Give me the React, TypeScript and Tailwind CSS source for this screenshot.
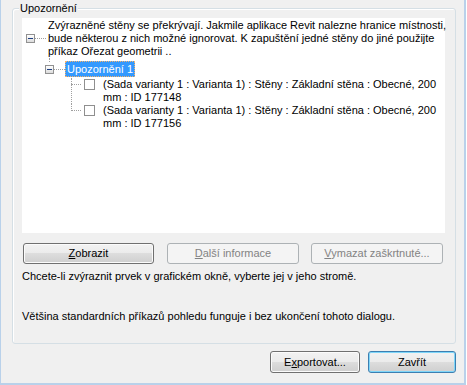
import React from "react";

const font = "font-['Tahoma','Liberation_Sans',Arial,sans-serif]";

const Expander: React.FC = () => (
  <span className="flex h-[9px] w-[9px] shrink-0 items-center justify-center border border-[#919191] bg-[linear-gradient(to_bottom,#ffffff,#dcdcdc)]">
    <span className="h-[1px] w-[5px] bg-[#1e3f82]" />
  </span>
);

const HDots: React.FC<{ w: string }> = ({ w }) => (
  <span className={`h-0 border-t border-dotted border-[#a0a0a0] ${w}`} />
);

const Btn: React.FC<{
  w: string;
  h: string;
  disabled?: boolean;
  primary?: boolean;
  children: React.ReactNode;
}> = ({ w, h, disabled, primary, children }) => {
  const look = disabled
    ? "border-[#adb2b5] bg-[#f4f4f4] text-[#838383]"
    : primary
      ? "border-[#3c7fb1] text-black shadow-[inset_0_0_0_1px_#7fd6f9] bg-[linear-gradient(to_bottom,#f2f2f2_0%,#ebebeb_50%,#dddddd_50%,#cfcfcf_100%)]"
      : "border-[#707070] text-black shadow-[inset_0_0_0_1px_#fbfbfb] bg-[linear-gradient(to_bottom,#f2f2f2_0%,#ebebeb_50%,#dddddd_50%,#cfcfcf_100%)]";
  return (
    <div
      className={`flex shrink-0 items-center justify-center rounded-[3px] border text-[11px] leading-[13px] ${w} ${h} ${look}`}
    >
      {children}
    </div>
  );
};

const Item: React.FC<{ id: string; last?: boolean }> = ({ id, last }) => (
  <div className="relative flex">
    <span
      className={`absolute left-[49px] top-0 border-l border-dotted border-[#a0a0a0] ${last ? "h-[7px]" : "h-[26px]"}`}
    />
    <div className="flex h-[13px] w-[81px] shrink-0 items-center pl-[49px]">
      <HDots w="w-[10px]" />
      <span className="ml-[3px] h-[11px] w-[11px] shrink-0 border border-[#8f8f8f] bg-white" />
    </div>
    <div className="whitespace-nowrap leading-[13px]">
      (Sada varianty 1 : Varianta 1) : Stěny : Základní stěna : Obecné, 200
      <br />
      mm : ID {id}
    </div>
  </div>
);

export default function App() {
  return (
    <div className={`h-[385px] w-[467px] bg-white ${font} text-[11px] text-black`}>
      <div className="flex h-[385px] w-[466px] flex-col border-b-2 border-l border-r-2 border-[#b9d1ea] bg-[#f0f0f0]">
        {/* group box */}
        <div className="relative ml-[11px] mt-[8px] h-[336px] w-[444px] rounded-[3px] border border-[#d5dfe5] pl-[9px] pt-[9px] shadow-[inset_1px_1px_0_#ffffff]">
          <span className="absolute -top-[7px] left-[6px] bg-[#f0f0f0] px-[1px] leading-[13px]">
            Upozornění
          </span>

          {/* tree */}
          <div className="h-[215px] w-[423px] bg-white pt-[1px]">
            <div className="flex">
              <div className="flex w-[26px] shrink-0 items-center pl-[4px]">
                <Expander />
                <HDots w="w-[11px]" />
              </div>
              <div className="whitespace-nowrap leading-[13px]">
                Zvýrazněné stěny se překrývají. Jakmile aplikace Revit nalezne hranice místnosti,
                <br />
                bude některou z nich možné ignorovat. K zapuštění jedné stěny do jiné použijte
                <br />
                příkaz Ořezat geometrii ..
              </div>
            </div>

            <div className="relative mt-[3px] flex h-[16px]">
              <span className="absolute -top-[3px] left-[27px] h-[4px] border-l border-dotted border-[#a0a0a0]" />
              <div className="flex w-[43px] shrink-0 items-center pl-[23px]">
                <Expander />
                <HDots w="w-[11px]" />
              </div>
              <div className="flex h-[16px] items-center border border-dotted border-[#f6b26b] bg-[#3399ff] px-[1px] leading-[13px] text-white">
                Upozornění 1
              </div>
            </div>

            <div className="pt-[1px]">
              <Item id="177148" />
              <Item id="177156" last />
            </div>
          </div>

          {/* buttons */}
          <div className="mt-[10px] flex pl-[1px]">
            <Btn w="w-[131px]" h="h-[21px]">
              <span>
                <span className="underline">Z</span>obrazit
              </span>
            </Btn>
            <div className="ml-[13px]">
              <Btn w="w-[132px]" h="h-[21px]" disabled>
                <span>
                  <span className="underline">D</span>alší informace
                </span>
              </Btn>
            </div>
            <div className="ml-[12px]">
              <Btn w="w-[132px]" h="h-[21px]" disabled>
                <span>
                  <span className="underline">V</span>ymazat zaškrtnuté...
                </span>
              </Btn>
            </div>
          </div>

          <p className="mt-[6px] leading-[13px]">
            Chcete-li zvýraznit prvek v grafickém okně, vyberte jej v jeho stromě.
          </p>
          <p className="mt-[27px] leading-[13px]">
            Většina standardních příkazů pohledu funguje i bez ukončení tohoto dialogu.
          </p>
        </div>

        {/* dialog buttons */}
        <div className="ml-[11px] mt-[7px] flex w-[444px] justify-end gap-[8px]">
          <Btn w="w-[90px]" h="h-[22px]">
            <span>
              E<span className="underline">x</span>portovat...
            </span>
          </Btn>
          <Btn w="w-[88px]" h="h-[22px]" primary>
            Zavřít
          </Btn>
        </div>
      </div>
    </div>
  );
}
